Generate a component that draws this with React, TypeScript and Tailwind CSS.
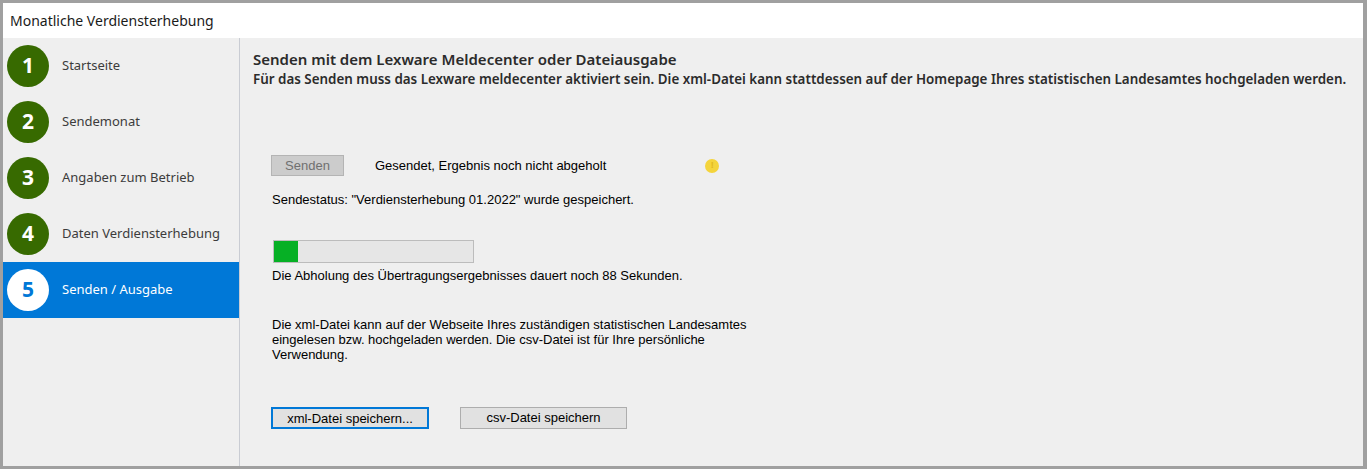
import React from 'react';

const steps = [
  { n: 1, label: 'Startseite' },
  { n: 2, label: 'Sendemonat' },
  { n: 3, label: 'Angaben zum Betrieb' },
  { n: 4, label: 'Daten Verdiensterhebung' },
  { n: 5, label: 'Senden / Ausgabe' },
];

const ACTIVE = 5;

function StepItem({ n, label }: { n: number; label: string }) {
  const active = n === ACTIVE;
  return (
    <div className={`flex h-14 items-center pl-[4px] ${active ? 'bg-[#0078d7]' : ''}`}>
      <div
        className={`flex h-[42px] w-[42px] items-center justify-center rounded-full text-[21px] font-bold ${
          active ? 'bg-white text-[#0078d7]' : 'bg-[#376a00] text-white'
        }`}
      >
        {n}
      </div>
      <span className={`ml-[13px] text-[13px] ${active ? 'text-white' : 'text-[#3c3c3c]'}`}>{label}</span>
    </div>
  );
}

export default function App() {
  return (
    <div className="h-[469px] w-[1367px] border-t-[3px] border-r-4 border-b-[3px] border-l-[3px] border-[#a0a0a0] bg-[#efefef] font-['Noto_Sans',sans-serif]">
      <div className="flex h-[35px] items-center bg-white pl-[7px] text-[14px] text-[#1a1a1a]">
        Monatliche Verdiensterhebung
      </div>

      <div className="flex h-[428px]">
        {/* Sidebar */}
        <div className="w-[237px] border-r border-[#c9ccd3]">
          {steps.map((s) => (
            <StepItem key={s.n} {...s} />
          ))}
        </div>

        {/* Main */}
        <div className="flex-1 pl-[13px] pt-[11px]">
          <h2 className="text-[15px] font-semibold leading-5 text-[#2b2b2b]">
            Senden mit dem Lexware Meldecenter oder Dateiausgabe
          </h2>
          <p className="whitespace-nowrap text-[13.4px] font-semibold leading-5 text-[#2b2b2b]">
            Für das Senden muss das Lexware meldecenter aktiviert sein. Die xml-Datei kann stattdessen auf der Homepage Ihres statistischen Landesamtes hochgeladen werden.
          </p>

          <div className="pl-[18px] font-['Liberation_Sans',Arial,sans-serif] text-[13px] text-black">
            <div className="mt-[66px] flex items-center">
              <button className="h-[21px] w-[73px] border border-[#b4b4b4] bg-[#cccccc] text-[13px] text-[#707070]">
                Senden
              </button>
              <span className="ml-[31px]">Gesendet, Ergebnis noch nicht abgeholt</span>
              <span className="ml-[99px] flex h-[14px] w-[14px] items-center justify-center rounded-full bg-[#f4d43c] text-[9px] font-bold leading-none text-[#e0b820]">
                !
              </span>
            </div>

            <div className="mt-[14px] pl-[1px]">Sendestatus: "Verdiensterhebung 01.2022" wurde gespeichert.</div>

            <div className="mt-[30px] ml-[2px] h-[23px] w-[201px] border border-[#bcbcbc] bg-[#e6e6e6]">
              <div className="h-full w-[24px] bg-[#06b025]" />
            </div>
            <div className="mt-[3px] pl-[1px]">Die Abholung des Übertragungsergebnisses dauert noch 88 Sekunden.</div>

            <p className="mt-[32px] w-[490px] pl-[1px] leading-[15px]">
              Die xml-Datei kann auf der Webseite Ihres zuständigen statistischen Landesamtes eingelesen bzw. hochgeladen werden. Die csv-Datei ist für Ihre persönliche Verwendung.
            </p>

            <div className="mt-[45px] flex items-center">
              <button className="h-[22px] w-[158px] border-2 border-[#0078d7] bg-[#e1e1e1] text-[13px] text-black">
                xml-Datei speichern...
              </button>
              <button className="ml-[31px] h-[22px] w-[167px] border border-[#adadad] bg-[#e1e1e1] text-[13px] text-black">
                csv-Datei speichern
              </button>
            </div>
          </div>
        </div>
      </div>
    </div>
  );
}
